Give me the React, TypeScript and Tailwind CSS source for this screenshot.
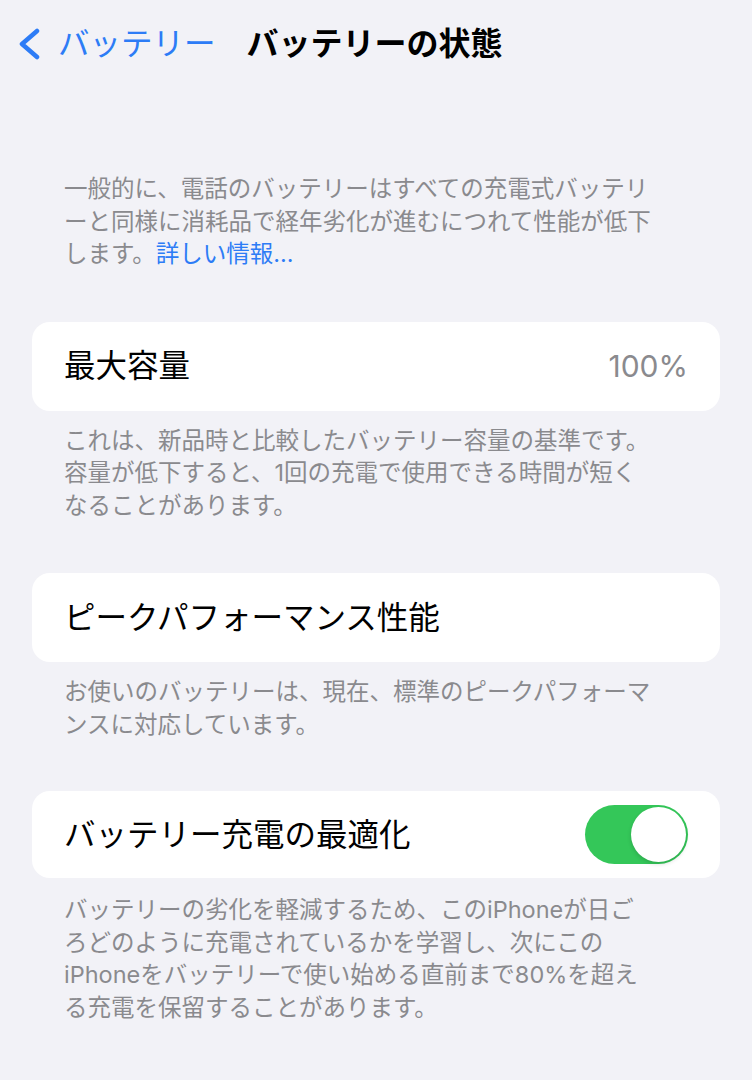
import { ReactNode } from "react";

const font = { fontFamily: 'Inter, "Noto Sans CJK JP", sans-serif' };

function Footer({ lines, className = "" }: { lines: ReactNode[]; className?: string }) {
  return (
    <div className={`px-[64px] text-[23.5px] leading-[32.5px] text-[#8a8a8e] ${className}`}>
      {lines.map((l, i) => (
        <div key={i} className="whitespace-nowrap">
          {l}
        </div>
      ))}
    </div>
  );
}

function Card({ children, h = "h-[89px]" }: { children: ReactNode; h?: string }) {
  return (
    <div className={`mx-[32px] flex ${h} items-center justify-between rounded-[18px] bg-white pl-[32px] pr-[32px]`}>
      {children}
    </div>
  );
}

export default function App() {
  return (
    <div style={font} className="min-h-[1080px] w-[752px] bg-[#f2f2f7] text-black">
      {/* nav bar */}
      <div className="flex h-[88px] items-center">
        <div className="flex items-center pl-[16px] text-[#2d7cf6]">
          <svg width="26" height="32" viewBox="0 0 26 32" fill="none">
            <path
              d="M21 3 L6 16 L21 29"
              stroke="#2d7cf6"
              strokeWidth="4.5"
              strokeLinecap="round"
              strokeLinejoin="round"
            />
          </svg>
          <span className="ml-[16px] text-[31.5px]">バッテリー</span>
        </div>
        <span className="ml-[31px] text-[32px] font-semibold">バッテリーの状態</span>
      </div>

      <Footer
        className="pt-[85px]"
        lines={[
          "一般的に、電話のバッテリーはすべての充電式バッテリ",
          "ーと同様に消耗品で経年劣化が進むにつれて性能が低下",
          <>
            します。<span className="text-[#2d7cf6]">詳しい情報...</span>
          </>,
        ]}
      />

      <div className="mt-[51px]">
        <Card>
          <span className="text-[31.5px]">最大容量</span>
          <span className="text-[30px] text-[#8a8a8e]">100%</span>
        </Card>
      </div>
      <Footer
        className="mt-[14px]"
        lines={[
          "これは、新品時と比較したバッテリー容量の基準です。",
          "容量が低下すると、1回の充電で使用できる時間が短く",
          "なることがあります。",
        ]}
      />

      <div className="mt-[51px]">
        <Card>
          <span className="text-[31.5px]">ピークパフォーマンス性能</span>
        </Card>
      </div>
      <Footer
        className="mt-[14px]"
        lines={[
          "お使いのバッテリーは、現在、標準のピークパフォーマ",
          "ンスに対応しています。",
        ]}
      />

      <div className="mt-[50px]">
        <Card h="h-[87px]">
          <span className="text-[31.5px]">バッテリー充電の最適化</span>
          <div className="flex h-[59px] w-[103px] items-center justify-end rounded-full bg-[#34c759] p-[2px]">
            <div className="h-[55px] w-[55px] rounded-full bg-white shadow-[0_2px_4px_rgba(0,0,0,0.15)]" />
          </div>
        </Card>
      </div>
      <Footer
        className="mt-[16px]"
        lines={[
          "バッテリーの劣化を軽減するため、このiPhoneが日ご",
          "ろどのように充電されているかを学習し、次にこの",
          "iPhoneをバッテリーで使い始める直前まで80%を超え",
          "る充電を保留することがあります。",
        ]}
      />
    </div>
  );
}
